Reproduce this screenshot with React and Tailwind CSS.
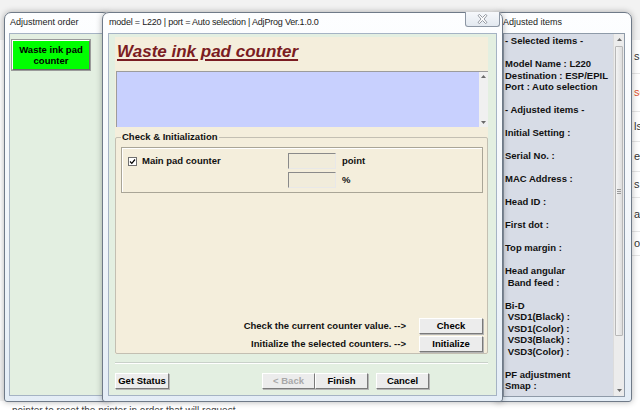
import React from 'react';

const sans = "font-['Liberation_Sans',Arial,sans-serif]";

const adjusted = [
  '- Selected items -',
  '',
  'Model Name : L220',
  'Destination : ESP/EPIL',
  'Port : Auto selection',
  '',
  '- Adjusted items -',
  '',
  'Initial Setting :',
  '',
  'Serial No. :',
  '',
  'MAC Address :',
  '',
  'Head ID :',
  '',
  'First dot :',
  '',
  'Top margin :',
  '',
  'Head angular',
  ' Band feed :',
  '',
  'Bi-D',
  ' VSD1(Black) :',
  ' VSD1(Color) :',
  ' VSD3(Black) :',
  ' VSD3(Color) :',
  '',
  'PF adjustment',
  'Smap :',
];

const behind = [
  { t: 's', c: 'h-[34px] text-[#333]' },
  { t: 'se', c: 'h-[38px] text-[#e0502e]' },
  { t: 'ls', c: 'h-[30px] text-[#333]' },
  { t: 'ed', c: 'h-[30px] text-[#333]' },
  { t: 's', c: 'h-[26px] text-[#333]' },
  { t: 'atio', c: 'h-[34px] text-[#333]' },
  { t: 'on', c: 'h-[24px] text-[#333]' },
];

// classic raised win32 button
const Btn = ({ children, className = '', disabled = false }) => (
  <div
    className={`flex items-center justify-center h-[16px] bg-[#ececec] border border-t-white border-l-white border-r-[#7a7a7a] border-b-[#7a7a7a] shadow-[1px_1px_0_#b5b5b5] text-[9.5px] font-bold ${disabled ? 'text-[#a8a8a8]' : 'text-black'} ${className}`}
  >
    {children}
  </div>
);

const Arrow = ({ up }) => (
  <svg width="5" height="3" viewBox="0 0 5 3">
    <path d={up ? 'M0 3 L2.5 0 L5 3 Z' : 'M0 0 L2.5 3 L5 0 Z'} fill="#6a6a6a" />
  </svg>
);

const CloseGlyph = () => (
  <svg width="11" height="10" viewBox="0 0 11 10">
    <path
      d="M1 1.5 L2.5 0.5 L5.5 3.5 L8.5 0.5 L10 1.5 L7 5 L10 8.5 L8.5 9.5 L5.5 6.5 L2.5 9.5 L1 8.5 L4 5 Z"
      fill="#ffffff"
      stroke="#8a9099"
      strokeWidth="0.9"
      strokeLinejoin="round"
    />
  </svg>
);

const frame =
  'absolute flex flex-col rounded-t-[7px] rounded-b-[3px] border border-[#6f7a88] bg-linear-to-b from-[#fdfeff] via-[#f3f7fb] to-[#e4edf6] shadow-[0_0_6px_rgba(0,0,0,0.3)]';

const Field = () => (
  <div className="w-[48px] h-[16px] border border-t-[#8a8a8a] border-l-[#8a8a8a] border-r-[#e8e8e8] border-b-[#e8e8e8] bg-[#f1ecdb]" />
);

export default function App() {
  return (
    <div className={`relative w-[640px] h-[410px] overflow-hidden bg-[#f2f2f2] ${sans}`}>
      {/* desktop content peeking out behind the windows */}
      <div className="absolute left-[628px] top-[40px] w-[20px] h-[370px] bg-white border-l border-[#e2e2e2] flex flex-col">
        {behind.map((b, i) => (
          <div key={i} className={`flex items-center pl-[5px] border-b border-[#e6e6e6] text-[11px] ${b.c}`}>
            {b.t}
          </div>
        ))}
      </div>
      <div className="absolute left-0 top-[401px] w-[640px] h-[9px] bg-white">
        <div className="pl-[12px] pt-[4px] text-[10px] leading-[12px] text-[#444] whitespace-nowrap">
          pointer to reset the printer in order that will request
        </div>
      </div>
      <div className="absolute left-0 top-[40px] w-[5px] h-[300px] bg-white border-r border-[#9a9a9a]" />

      {/* left window: Adjustment order */}
      <div className={`${frame} left-[4px] top-[12px] w-[106px] h-[390px] px-[4px] pb-[5px]`}>
        <div className="h-[20px] flex items-center pl-[1px] text-[9px] text-[#1a1a1a]">Adjustment order</div>
        <div className="flex-1 border border-[#a5b3c4] bg-[#e3efe1] pl-[2px] pt-[6px]">
          <div className="w-[78px] h-[30px] flex flex-col items-center justify-center bg-[#00ff00] border border-t-white border-l-white border-r-[#6a6a6a] border-b-[#6a6a6a] shadow-[0_0_0_1px_#9a9a9a] text-[9.5px] leading-[11px] font-bold text-black">
            <span>Waste ink pad</span>
            <span>counter</span>
          </div>
        </div>
      </div>

      {/* right window: Adjusted items */}
      <div className={`${frame} left-[495px] top-[12px] w-[137px] h-[390px] pl-[7px] pr-[6px] pb-[4px]`}>
        <div className="h-[20px] flex items-center text-[9px] text-[#1a1a1a]">Adjusted items</div>
        <div className="flex-1 flex border border-[#8e9aa8] bg-[#d7dce6]">
          <div className="flex-1 pl-[1px] pt-[1px] text-[9.5px] leading-[11.5px] font-bold text-[#111] whitespace-pre overflow-hidden">
            {adjusted.map((l, i) => (
              <div key={i} className="h-[11.5px]">{l}</div>
            ))}
          </div>
          <div className="w-[11px] flex flex-col items-center bg-[#ececec] border-l border-[#dcdcdc]">
            <div className="h-[11px] flex items-center justify-center"><Arrow up /></div>
            <div className="w-[8px] h-[290px] mt-[1px] rounded-[1px] border border-[#b8b8b8] bg-linear-to-r from-[#f4f4f4] to-[#dedede] flex flex-col items-center justify-center gap-[1px]">
              <div className="w-[4px] h-px bg-[#9a9a9a]" />
              <div className="w-[4px] h-px bg-[#9a9a9a]" />
              <div className="w-[4px] h-px bg-[#9a9a9a]" />
            </div>
            <div className="flex-1" />
            <div className="h-[11px] flex items-center justify-center"><Arrow /></div>
          </div>
        </div>
      </div>

      {/* main window */}
      <div className={`${frame} left-[102px] top-[12px] w-[401px] h-[390px] px-[5px] pb-[5px]`}>
        <div className="h-[20px] flex items-center justify-between pl-[1px]">
          <span className="text-[9px] tracking-[-0.2px] text-[#1a1a1a]">model = L220 | port = Auto selection | AdjProg Ver.1.0.0</span>
          <div className="self-start -mt-px -mr-[3px] w-[35px] h-[15px] flex items-center justify-center rounded-b-[3px] border border-t-0 border-[#8c96a3] bg-linear-to-b from-[#f6f8fb] to-[#e3e9f0]">
            <CloseGlyph />
          </div>
        </div>
        <div className="flex-1 flex flex-col border border-[#a5b3c4] bg-[#e3efe1] pl-[6px] pt-[3px]">
          <div className="w-[373px] h-[317px] flex flex-col bg-[#f4eedc]">
            <div className="h-[34px] pl-[2px] pt-[3px]">
              <span className="text-[17px] leading-[20px] font-bold italic text-[#7b1c22] underline decoration-2 underline-offset-[2px]">
                Waste ink pad counter
              </span>
            </div>
            <div className="ml-[1px] h-[56px] flex border-t border-l border-[#9c9c9c]">
              <div className="flex-1 bg-[#c8d0fe]" />
              <div className="w-[9px] flex flex-col items-center justify-between py-[3px] bg-[#f0f0f0]">
                <Arrow up />
                <Arrow />
              </div>
            </div>
            {/* group box */}
            <div className="relative mt-[10px] flex-1 flex flex-col border border-[#c3bfb2] rounded-[2px] pl-[5px] pr-[4px] pt-[9px] pb-[1px]">
              <span className="absolute left-[5px] top-[-7px] px-[1px] bg-[#f4eedc] text-[9.5px] leading-[12px] font-bold text-[#111]">
                Check &amp; Initialization
              </span>
              <div className="h-[46px] border border-[#a9a597] shadow-[inset_1px_1px_0_#ffffff] pl-[6px] pt-[5px]">
                <div className="flex items-center h-[16px]">
                  <div className="w-[160px] flex items-center">
                    <div className="w-[9px] h-[9px] border border-[#6f6f6f] bg-white flex items-center justify-center">
                      <svg width="7" height="7" viewBox="0 0 7 7">
                        <path d="M1 3.5 L2.8 5.3 L6 1.5" fill="none" stroke="#000" strokeWidth="1.2" />
                      </svg>
                    </div>
                    <span className="ml-[5px] text-[9.5px] font-bold text-[#111]">Main pad counter</span>
                  </div>
                  <Field />
                  <span className="ml-[6px] text-[9.5px] font-bold text-[#111]">point</span>
                </div>
                <div className="flex items-center h-[16px] mt-[3px]">
                  <div className="w-[160px]" />
                  <Field />
                  <span className="ml-[6px] text-[9.5px] font-bold text-[#111]">%</span>
                </div>
              </div>
              <div className="flex-1" />
              <div className="flex items-center justify-end">
                <span className="text-[9.5px] font-bold text-[#111]">Check the current counter value. --&gt;</span>
                <Btn className="ml-[13px] w-[64px]">Check</Btn>
              </div>
              <div className="flex items-center justify-end mt-[2px]">
                <span className="text-[9.5px] font-bold text-[#111]">Initialize the selected counters. --&gt;</span>
                <Btn className="ml-[13px] w-[64px]">Initialize</Btn>
              </div>
            </div>
          </div>
          <div className="mt-[8px] w-[373px] h-[2px] border-t border-[#c9d1c9] border-b border-b-white" />
          <div className="mt-[9px] flex">
            <Btn className="w-[54px]">Get Status</Btn>
            <Btn className="ml-[93px] w-[53px]" disabled>&lt; Back</Btn>
            <Btn className="w-[53px]">Finish</Btn>
            <Btn className="ml-[8px] w-[53px]">Cancel</Btn>
          </div>
        </div>
      </div>
    </div>
  );
}
